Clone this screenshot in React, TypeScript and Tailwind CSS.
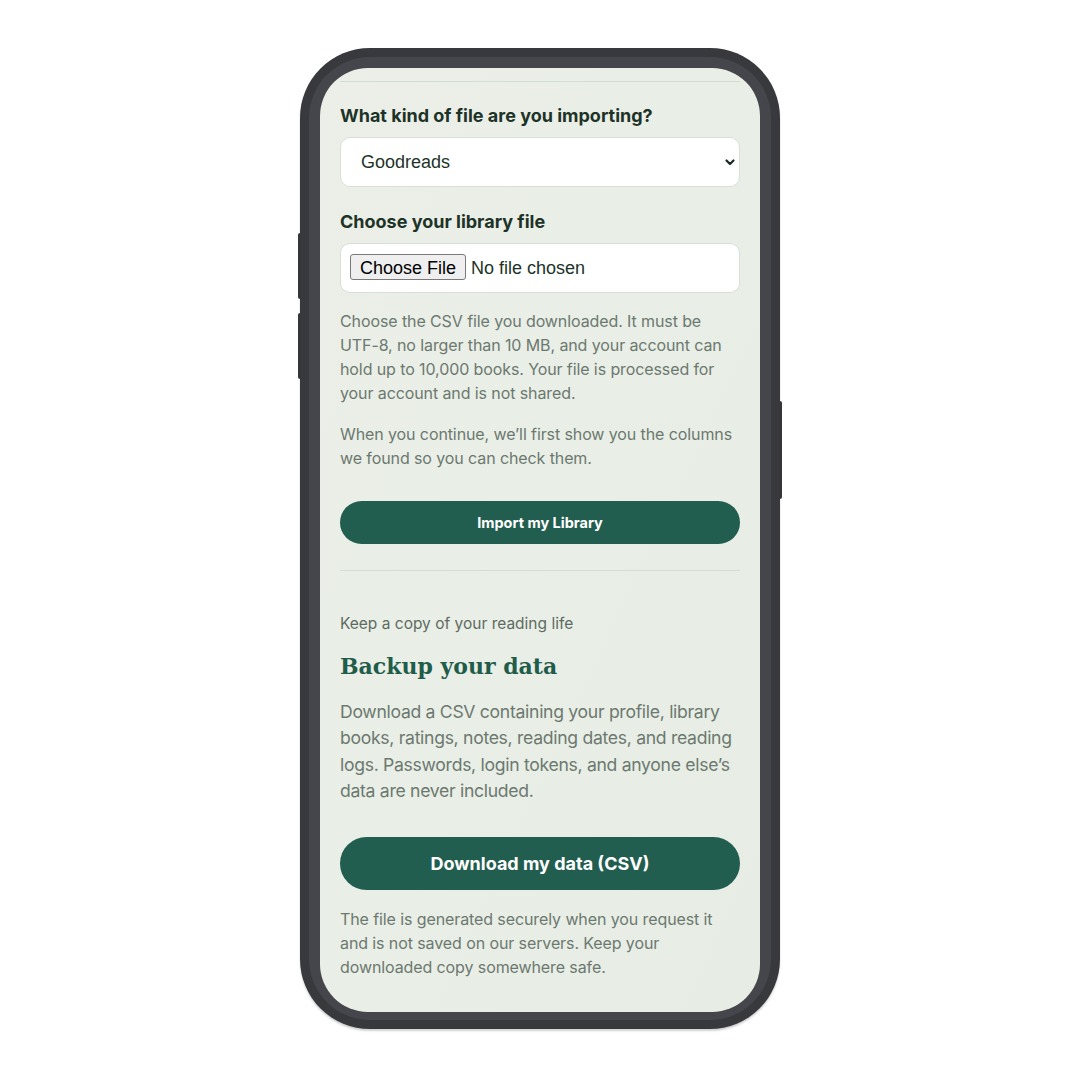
import React from 'react';

const sans = "font-['Inter',sans-serif]";

const ImportForm = () => {
  return (
    <div className="flex flex-col">
      <div className="border-t border-[#d4ddd4]" />
      <label className="mt-[22px] mb-[9px] text-[18px] leading-[24px] font-bold text-[#1d3328]">
        What kind of file are you importing?
      </label>
      <div className="relative">
        <select
          defaultValue="goodreads"
          className="w-full h-[50px] appearance-none rounded-[10px] border border-[#d6e0d7] bg-white pl-[20px] text-[18px] text-[#1d3328] font-['Liberation_Sans',Arial,sans-serif] outline-none"
        >
          <option value="goodreads">Goodreads</option>
          <option value="storygraph">StoryGraph</option>
        </select>
        <svg
          className="absolute right-[4px] top-[20px] pointer-events-none"
          width="12"
          height="10"
          viewBox="0 0 12 10"
        >
          <path d="M2.5 3.5 L6 7 L9.5 3.5" fill="none" stroke="#1d2a24" strokeWidth="2.2" strokeLinecap="round" strokeLinejoin="round" />
        </svg>
      </div>

      <label className="mt-[23px] mb-[9px] text-[18px] leading-[24px] font-bold text-[#1d3328]">
        Choose your library file
      </label>
      <div className="h-[50px] flex items-center rounded-[10px] border border-[#d6e0d7] bg-white px-[9px]">
        <input
          type="file"
          accept=".csv"
          className="text-[18px] text-[#1d3328] font-['Liberation_Sans',Arial,sans-serif] file:mr-[5px] file:h-[26px] file:px-[9px] file:rounded-[3px] file:border file:border-solid file:border-[#7a7a7a] file:bg-[#efefef] file:text-[18px] file:text-black file:font-['Liberation_Sans',Arial,sans-serif]"
        />
      </div>

      <p className="mt-[16px] text-[16px] leading-[24px] tracking-[-0.1px] text-[#6c7970]">
        Choose the CSV file you downloaded. It must be UTF-8, no larger than 10 MB, and your account can
        hold up to 10,000 books. Your file is processed for your account and is not shared.
      </p>
      <p className="mt-[17px] text-[16px] leading-[24px] tracking-[-0.1px] text-[#6c7970]">
        When you continue, we’ll first show you the columns we found so you can check them.
      </p>

      <button className="mt-[31px] h-[43px] w-full rounded-full bg-[#225e4f] text-[14.5px] font-bold text-white">
        Import my Library
      </button>

      <div className="mt-[26px] border-t border-[#d4ddd4]" />
    </div>
  );
};

const BackupSection = () => {
  return (
    <div className="flex flex-col">
      <p className="mt-[42px] text-[15.5px] leading-[22px] text-[#5e6b62]">Keep a copy of your reading life</p>
      <h2 className="mt-[15px] text-[22px] leading-[32px] font-bold text-[#1f5c4a] font-['DejaVu_Serif',Georgia,serif]">
        Backup your data
      </h2>
      <p className="mt-[17px] text-[17.6px] leading-[26.4px] tracking-[-0.3px] text-[#6c7970]">
        Download a CSV containing your profile, library books, ratings, notes, reading dates, and reading
        logs. Passwords, login tokens, and anyone else’s data are never included.
      </p>
      <button className="mt-[32px] h-[53px] w-full rounded-full bg-[#225e4f] text-[18px] font-bold text-white">
        Download my data (CSV)
      </button>
      <p className="mt-[17px] text-[16px] leading-[24px] tracking-[-0.1px] text-[#6c7970]">
        The file is generated securely when you request it and is not saved on our servers. Keep your
        downloaded copy somewhere safe.
      </p>
    </div>
  );
};

export default function App() {
  return (
    <div className={`w-[1080px] h-[1080px] bg-white flex justify-center pt-[48px] ${sans}`}>
      <div className="relative w-[480px] h-[981px]">
        {/* side buttons */}
        <div className="absolute left-[-2px] top-[185px] w-[3px] h-[66px] rounded-l-[2px] bg-[#35363a]" />
        <div className="absolute left-[-2px] top-[265px] w-[3px] h-[66px] rounded-l-[2px] bg-[#35363a]" />
        <div className="absolute right-[-2px] top-[353px] w-[3px] h-[98px] rounded-r-[2px] bg-[#35363a]" />

        <div className="h-full rounded-[70px] bg-[#38393d] p-[9px] shadow-[0_2px_2px_rgba(0,0,0,0.18)]">
          <div className="h-full rounded-[61px] bg-[#45464b] p-[11px] pb-[8px]">
            <div className="h-full rounded-[48px] bg-gradient-to-br from-[#ebefe7] via-[#e9eee6] to-[#e7ede4] overflow-hidden px-[20px] pt-[13px]">
              <ImportForm />
              <BackupSection />
            </div>
          </div>
        </div>
      </div>
    </div>
  );
}
